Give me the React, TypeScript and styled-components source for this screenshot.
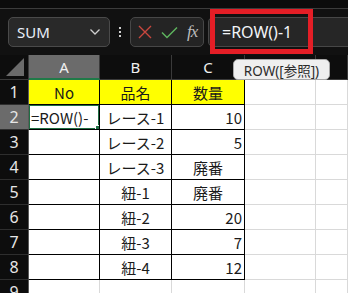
import styled, { createGlobalStyle } from 'styled-components';

const GlobalStyle = createGlobalStyle`
  body {
    margin: 0;
    background: #111111;
    font-family: "Noto Sans", "Noto Sans CJK JP", sans-serif;
  }
`;

const App = () => {
  return (
    <Screen>
      <GlobalStyle />
      <TopStrip />
      <Toolbar>
        <NameBox>
          <span>SUM</span>
          <svg width="12" height="8" viewBox="0 0 12 8">
            <path d="M1.5 1.5 L6 6 L10.5 1.5" fill="none" stroke="#cfcfcf" strokeWidth="1.3" />
          </svg>
        </NameBox>
        <Grip>
          <i />
          <i />
          <i />
        </Grip>
        <ButtonGroup>
          {/* キャンセル */}
          <svg width="14" height="14" viewBox="0 0 14 14">
            <path d="M1 1 L13 13 M13 1 L1 13" stroke="#c8473e" strokeWidth="1.4" />
          </svg>
          {/* 確定 */}
          <svg width="17" height="13" viewBox="0 0 17 13">
            <path d="M1 6.5 L6 11.5 L16 1.5" fill="none" stroke="#5fb35f" strokeWidth="1.5" />
          </svg>
          <Fx>fx</Fx>
        </ButtonGroup>
        <FormulaInput>=ROW()-1</FormulaInput>
      </Toolbar>
      <Highlight />

      <Sheet>
        <Corner>
          <svg width="18" height="18" viewBox="0 0 18 18">
            <path d="M18 0 L18 18 L0 18 Z" fill="#6b6b6b" />
          </svg>
        </Corner>
        {columns.map((c) => (
          <ColHeader key={c.id} $active={c.id === 'A'}>
            {c.label}
          </ColHeader>
        ))}

        {rows.map((row, i) => {
          const n = i + 1;
          return [
            <RowHeader key={`h${n}`} $active={n === 2}>
              {n}
            </RowHeader>,
            ...row.map((cell, j) => (
              <Cell
                key={`${n}-${j}`}
                $table={j < 3 && n <= 8}
                $yellow={n === 1 && j < 3}
                $align={cell.align}
              >
                {cell.text}
                {n === 2 && j === 0 && (
                  <Selection>
                    <Handle />
                  </Selection>
                )}
              </Cell>
            ))
          ];
        })}
      </Sheet>

      <Tooltip>ROW([参照])</Tooltip>
    </Screen>
  );
};

interface CellData {
  text: string;
  align?: 'left' | 'center' | 'right';
}

// D列の見出しはツールチップに隠れている
const columns = [
  { id: 'A', label: 'A' },
  { id: 'B', label: 'B' },
  { id: 'C', label: 'C' },
  { id: 'D', label: '' },
  { id: 'E', label: '' }
];

const empty: CellData = { text: '' };

const rows: CellData[][] = [
  [{ text: 'No', align: 'center' }, { text: '品名', align: 'center' }, { text: '数量', align: 'center' }, empty, empty],
  [{ text: '=ROW()-', align: 'left' }, { text: 'レース-1', align: 'center' }, { text: '10', align: 'right' }, empty, empty],
  [empty, { text: 'レース-2', align: 'center' }, { text: '5', align: 'right' }, empty, empty],
  [empty, { text: 'レース-3', align: 'center' }, { text: '廃番', align: 'center' }, empty, empty],
  [empty, { text: '紐-1', align: 'center' }, { text: '廃番', align: 'center' }, empty, empty],
  [empty, { text: '紐-2', align: 'center' }, { text: '20', align: 'right' }, empty, empty],
  [empty, { text: '紐-3', align: 'center' }, { text: '7', align: 'right' }, empty, empty],
  [empty, { text: '紐-4', align: 'center' }, { text: '12', align: 'right' }, empty, empty],
  [empty, empty, empty, empty, empty]
];

const Screen = styled.div`
  position: relative;
  width: 348px;
  height: 293px;
  overflow: hidden;
  background: #111111;
`;

const TopStrip = styled.div`
  height: 8px;
  background: #0c0c0c;
  border-bottom: 1px solid #3c3c3c;
`;

const Toolbar = styled.div`
  height: 46px;
  display: flex;
  align-items: center;
  padding-left: 8px;
  background: #111111;
`;

const NameBox = styled.div`
  box-sizing: border-box;
  width: 102px;
  height: 30px;
  display: flex;
  align-items: center;
  justify-content: space-between;
  padding: 0 8px 0 8px;
  background: #292929;
  border: 1px solid #4a4a4a;
  border-radius: 5px;
  color: #e8eef8;
  font-size: 15px;
`;

const Grip = styled.div`
  width: 20px;
  display: flex;
  flex-direction: column;
  align-items: center;
  gap: 2px;

  i {
    width: 2px;
    height: 2px;
    background: #d0d0d0;
  }
`;

const ButtonGroup = styled.div`
  box-sizing: border-box;
  width: 74px;
  height: 30px;
  display: flex;
  align-items: center;
  gap: 9px;
  padding-left: 7px;
  background: #242424;
  border: 1px solid #474747;
  border-radius: 5px;
`;

const Fx = styled.span`
  font-family: "Liberation Serif", serif;
  font-style: italic;
  font-size: 17px;
  color: #bdbdbd;
  letter-spacing: -1px;
`;

const FormulaInput = styled.div`
  box-sizing: border-box;
  height: 30px;
  flex: 1;
  margin-left: 4px;
  margin-right: -10px;
  display: flex;
  align-items: center;
  padding-left: 13px;
  background: #262626;
  border: 1px solid #474747;
  border-radius: 5px 0 0 5px;
  color: #f2f4f8;
  font-size: 16px;
`;

const Highlight = styled.div`
  position: absolute;
  left: 210px;
  top: 9px;
  width: 103px;
  height: 45px;
  box-sizing: border-box;
  border: 5px solid #e41e26;
`;

const Sheet = styled.div`
  display: grid;
  grid-template-columns: 29px 71px 72px 73px 71px 1fr;
  grid-auto-rows: 25px;
  background: #ffffff;
`;

const Corner = styled.div`
  background: #0d0d0d;
  border-right: 1px solid #3a3a3a;
  border-bottom: 1px solid #3a3a3a;
  display: flex;
  align-items: flex-end;
  justify-content: flex-end;
  padding: 0 4px 3px 0;
`;

const ColHeader = styled.div<{ $active?: boolean }>`
  box-sizing: border-box;
  display: flex;
  align-items: center;
  justify-content: center;
  color: #f0f0f0;
  font-size: 15px;
  background: ${(p) => (p.$active ? '#6b6b6b' : '#0d0d0d')};
  border-right: 1px solid #3a3a3a;
  border-bottom: ${(p) => (p.$active ? '2px solid #1f7a48' : '1px solid #3a3a3a')};
`;

const RowHeader = styled.div<{ $active?: boolean }>`
  box-sizing: border-box;
  display: flex;
  align-items: center;
  justify-content: center;
  color: #e6e6e6;
  font-size: 16px;
  background: ${(p) => (p.$active ? '#6b6b6b' : '#0d0d0d')};
  border-right: 1px solid #5a5a5a;
  border-bottom: 1px solid #2e2e2e;
`;

const Cell = styled.div<{ $table?: boolean; $yellow?: boolean; $align?: string }>`
  position: relative;
  box-sizing: border-box;
  display: flex;
  align-items: center;
  justify-content: ${(p) =>
    p.$align === 'right' ? 'flex-end' : p.$align === 'center' ? 'center' : 'flex-start'};
  padding: 0 2px;
  white-space: nowrap;
  overflow: hidden;
  font-family: "Noto Sans CJK JP", sans-serif;
  font-size: 15px;
  color: #1a1a1a;
  background: ${(p) => (p.$yellow ? '#ffff00' : '#ffffff')};
  border-right: 1px solid ${(p) => (p.$table ? '#000000' : '#d9d9d9')};
  border-bottom: 1px solid ${(p) => (p.$table ? '#000000' : '#d9d9d9')};
`;

const Selection = styled.div`
  position: absolute;
  inset: -1px -1px -1px -1px;
  border: 2px solid #1f6e43;
  pointer-events: none;
`;

const Handle = styled.div`
  position: absolute;
  right: -4px;
  bottom: -4px;
  width: 5px;
  height: 5px;
  background: #1f6e43;
  border: 1px solid #ffffff;
`;

const Tooltip = styled.div`
  position: absolute;
  left: 233px;
  top: 59px;
  box-sizing: border-box;
  width: 97px;
  height: 21px;
  display: flex;
  align-items: center;
  justify-content: center;
  background: #efefef;
  border: 1px solid #a8a8a8;
  border-radius: 5px;
  color: #2b2b2b;
  font-family: "Noto Sans", "Noto Sans CJK JP", sans-serif;
  font-size: 13.5px;
  white-space: nowrap;
`;

export default App;
